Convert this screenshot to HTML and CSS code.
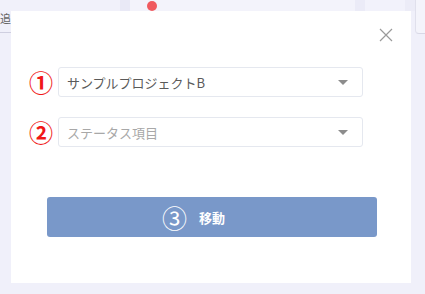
FILE: index.html
```html
<!DOCTYPE html>
<html lang="ja">
<head>
<meta charset="utf-8">
<link rel="stylesheet" href="styles.css">
</head>
<body>
<div class="backdrop">
  <div class="topbar">
    <div class="tile t1"></div>
    <div class="tile t2"></div>
    <div class="tile t3"></div>
    <div class="tile t4"></div>
    <div class="tile t5"></div>
    <div class="tile t6"></div>
  </div>
  <div class="side-left"><span class="add">追</span></div>
  <div class="side-right"></div>
</div>

<div class="modal">
  <div class="modal-head">
    <button class="close" aria-label="close">
      <svg width="14" height="14" viewBox="0 0 14 14"><path d="M1 1L13 13M13 1L1 13" stroke="#9a9a9a" stroke-width="1.2" fill="none"/></svg>
    </button>
  </div>
  <div class="field">
    <span class="num">①</span>
    <div class="select">
      <span class="value">サンプルプロジェクトB</span>
      <span class="caret"></span>
    </div>
  </div>
  <div class="field second">
    <span class="num">②</span>
    <div class="select">
      <span class="value placeholder">ステータス項目</span>
      <span class="caret"></span>
    </div>
  </div>
  <div class="actions">
    <button class="move"><span class="label"><span class="num3">③</span>移動</span></button>
  </div>
</div>
<span class="dot-top"></span>
</body>
</html>
```

FILE: styles.css
```css
* { box-sizing: border-box; }
html, body {
  margin: 0;
  padding: 0;
  width: 425px;
  height: 294px;
  overflow: hidden;
  background: #f0f0fa;
  font-family: "Noto Sans CJK JP", "Noto Sans", sans-serif;
}
.backdrop {
  position: relative;
  width: 425px;
  height: 294px;
}
.topbar {
  display: flex;
  height: 11px;
}
.tile { height: 11px; }
.t1 { width: 120px; background: #f1f1fa; }
.t2 { width: 10px; background: #e9e9f6; }
.t3 { width: 225px; background: #f3f3fb; }
.t4 { width: 10px; background: #ebebf7; }
.t5 { width: 40px; background: #f2f2fb; }
.t6 { width: 20px; background: #ececf7; }
.dot-top {
  position: absolute;
  left: 147px;
  top: 1px;
  width: 10px;
  height: 10px;
  border-radius: 50%;
  background: #f05a5f;
}
.side-left {
  width: 11px;
  height: 22px;
  border-bottom: 1px solid #cfcfe0;
  overflow: hidden;
}
.add {
  display: block;
  font-size: 11px;
  line-height: 14px;
  color: #666;
}
.side-right {
  position: absolute;
  right: 0;
  top: 0;
  width: 10px;
  height: 34px;
  background: #f4f4fb;
  border-bottom: 1px solid #d8d8e6;
  border-left: 1px solid #e0e0ec;
  border-bottom-left-radius: 4px;
}
.modal {
  position: absolute;
  left: 11px;
  top: 11px;
  width: 400px;
  height: 272px;
  background: #fff;
  padding: 0 48px 0 17px;
}
.modal-head {
  height: 56px;
  display: flex;
  justify-content: flex-end;
  align-items: flex-start;
  padding-top: 17px;
  margin-right: -30px;
}
.close {
  border: 0;
  background: none;
  padding: 0;
  width: 14px;
  height: 14px;
  cursor: pointer;
  display: block;
}
.close svg { display: block; }
.field {
  display: flex;
  align-items: center;
  gap: 4px;
}
.field.second { margin-top: 20px; }
.num {
  width: 26px;
  font-size: 24px;
  font-weight: 700;
  line-height: 30px;
  color: #f01818;
  text-align: center;
}
.select {
  flex: 1;
  height: 30px;
  border: 1px solid #e5e8ef;
  border-radius: 3px;
  display: flex;
  align-items: center;
  justify-content: space-between;
  padding: 0 14px 0 8px;
}
.value {
  font-size: 13px;
  color: #5a5a5a;
  line-height: 1;
}
.value.placeholder { color: #a8a8a8; }
.caret {
  width: 0;
  height: 0;
  border-left: 5px solid transparent;
  border-right: 5px solid transparent;
  border-top: 5px solid #8c8c8c;
}
.actions {
  margin-top: 50px;
  margin-right: -14px;
  margin-left: 19px;
}
.move {
  width: 330px;
  height: 40px;
  border: 0;
  border-radius: 3px;
  background: #7998c9;
  color: #fff;
  font-family: inherit;
  font-size: 13px;
  font-weight: 700;
  display: flex;
  align-items: center;
  justify-content: center;
  padding: 0;
}
.label {
  position: relative;
  line-height: 1;
}
.num3 {
  position: absolute;
  right: calc(100% + 12px);
  top: 50%;
  transform: translateY(-50%);
  font-size: 25px;
  font-weight: 400;
  line-height: 1;
}
```
